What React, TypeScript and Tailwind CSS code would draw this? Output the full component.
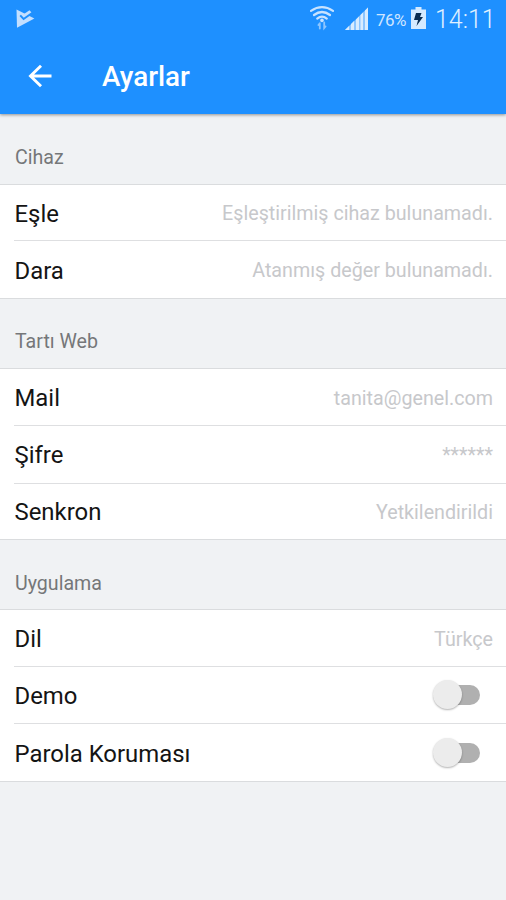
import React from "react";

type Row = {
  label: string;
  height: string;
  nudge: string;
  value?: string;
  toggle?: boolean;
};
type Section = { title: string; height: string; rows: Row[] };

const sections: Section[] = [
  {
    title: "Cihaz",
    height: "h-[70px] pt-[17px]",
    rows: [
      { label: "Eşle", height: "h-[56px]", nudge: "pt-[2px]", value: "Eşleştirilmiş cihaz bulunamadı." },
      { label: "Dara", height: "h-[58px]", nudge: "pt-[2px]", value: "Atanmış değer bulunamadı." },
    ],
  },
  {
    title: "Tartı Web",
    height: "h-[69px] pt-[17px]",
    rows: [
      { label: "Mail", height: "h-[57px]", nudge: "pt-[2px]", value: "tanita@genel.com" },
      { label: "Şifre", height: "h-[58px]", nudge: "pt-0", value: "******" },
      { label: "Senkron", height: "h-[56px]", nudge: "pt-0", value: "Yetkilendirildi" },
    ],
  },
  {
    title: "Uygulama",
    height: "h-[69px] pt-[18px]",
    rows: [
      { label: "Dil", height: "h-[57px]", nudge: "pt-[2px]", value: "Türkçe" },
      { label: "Demo", height: "h-[57px]", nudge: "pt-[2px]", toggle: true },
      { label: "Parola Koruması", height: "h-[58px]", nudge: "pt-[2px]", toggle: true },
    ],
  },
];

function StatusBar() {
  return (
    <div className="flex h-[38px] items-center text-[#cfe6ff]">
      <svg className="ml-4 shrink-0" width="19" height="20" viewBox="0 0 19 20" fill="none">
        <path d="M0.5 0.6 L18.4 9.6 L1 18.8 Z" fill="#c3dfff" />
        <path d="M8 5 L13.5 1.2 L16 4 L11 8 Z" fill="#c3dfff" />
        <path d="M4.2 6.4 L7.6 10 L16.4 3.8" stroke="#1e90ff" strokeWidth="1.9" />
      </svg>
      <div className="flex-1" />
      <svg className="shrink-0" width="24" height="26" viewBox="0 0 24 26" fill="none" stroke="#c8e3ff" strokeLinecap="round">
        <path d="M1 4.8 Q12 -2.5 23 4.8" strokeWidth="2.2" />
        <path d="M4 9 Q12 3 20 9" strokeWidth="2.2" />
        <path d="M7.2 12.6 Q12 8.5 16.8 12.6" strokeWidth="2.2" />
        <circle cx="12" cy="14.4" r="1.8" fill="#c8e3ff" stroke="none" />
        <path d="M9.8 22.5 V17.5 M8.4 19 L9.8 17.2 M14.2 16.5 V22 L15.6 20.4" stroke="#8ec6ff" strokeWidth="1.8" />
      </svg>
      <svg className="ml-[11px] shrink-0" width="24" height="24" viewBox="0 0 24 24">
        <path d="M0 23 L23 0.5 V23 Z" fill="#8cc5ff" />
        <path d="M0 23 L4 19 V23 Z M6 17 L9 14 V23 H6 Z M11 12.5 L14 9.5 V23 H11 Z M15.5 8 L18 5.5 V23 H15.5 Z M20 3.5 L23 0.5 V23 H20 Z" fill="#d9ecff" />
      </svg>
      <span className="ml-[7px] w-[31px] whitespace-nowrap pt-px text-[17px] leading-5 tracking-[-0.5px]">76%</span>
      <svg className="-mt-[2px] ml-1 shrink-0" width="15" height="22" viewBox="0 0 15 22">
        <path d="M4.5 0 H10.5 V2.5 H15 V22 H0 V2.5 H4.5 Z" fill="#d5eaff" />
        <path d="M5 6 H10.5 L9 10 H12 L5.5 19 L7 13 H3 Z" fill="#082b50" />
      </svg>
      <span className="ml-[9px] mr-[11px] w-[60px] whitespace-nowrap pt-[2px] text-[25px] font-light leading-7 text-[#e0f0ff]">14:11</span>
    </div>
  );
}

function Toggle() {
  return (
    <div className="relative mr-[13px] h-[20px] w-[46px]">
      <div className="ml-2 h-[20px] w-[38px] rounded-full bg-[#b0b0b0]" />
      <div className="absolute -left-px -top-[5px] size-[29px] rounded-full bg-[#ececec] shadow-[0_1px_2px_rgba(0,0,0,0.3)]" />
    </div>
  );
}

export default function App() {
  return (
    <div className="h-[900px] w-[506px] overflow-hidden bg-[#f0f2f4] font-[Roboto,sans-serif]">
      <header className="relative h-[114px] bg-[#1e90ff] shadow-[0_1px_3px_rgba(0,0,0,0.4)]">
        <StatusBar />
        <div className="flex h-[76px] items-center">
          <svg className="-mt-px ml-[28px] shrink-0" width="24" height="24" viewBox="0 0 24 24" fill="none" stroke="white" strokeWidth="2.9">
            <path d="M23.5 12 H3 M13 1.8 L2.5 12 L13 22.2" />
          </svg>
          <h1 className="ml-[50px] pt-px text-[27.8px] font-medium leading-8 text-white">Ayarlar</h1>
        </div>
      </header>
      {sections.map((s) => (
        <section key={s.title}>
          <h2 className={`flex items-center pl-[15px] text-[19.6px] text-[#757779] ${s.height}`}>
            <span>{s.title}</span>
          </h2>
          <div className="border-t border-b border-[#dadcde] bg-white">
            {s.rows.map((r, i) => (
              <div key={r.label} className={`pl-[14px] ${i === s.rows.length - 1 ? "-mb-px" : ""} ${r.height}`}>
                <div
                  className={`flex h-full items-center justify-between border-b pr-[13px] ${
                    i === s.rows.length - 1 ? "border-transparent" : "border-[#dedfe1]"
                  }`}
                >
                  <span className={`whitespace-nowrap pl-[0.5px] text-[23.9px] leading-8 text-[#141414] ${r.nudge}`}>{r.label}</span>
                  {r.toggle ? (
                    <Toggle />
                  ) : (
                    <span className="whitespace-nowrap pt-[3px] text-[19.7px] leading-7 text-[#c7c8cb]">{r.value}</span>
                  )}
                </div>
              </div>
            ))}
          </div>
        </section>
      ))}
    </div>
  );
}
